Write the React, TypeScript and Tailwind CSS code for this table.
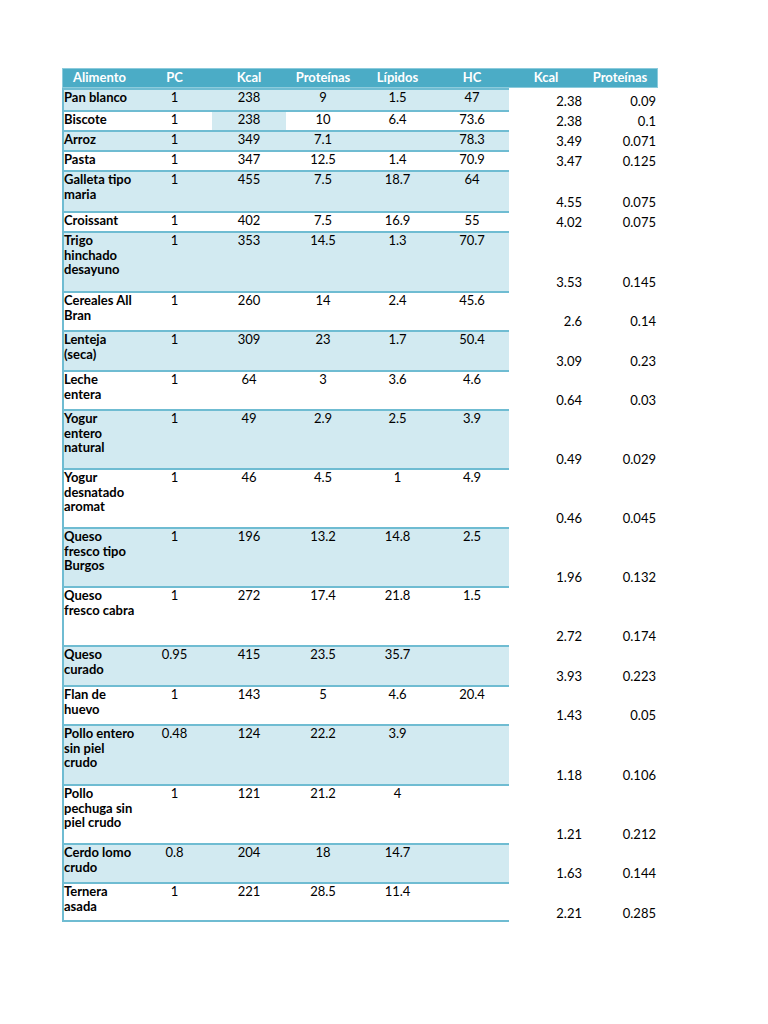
import React from "react"

type Row = {
  name: string[]
  pc: string
  kcal: string
  prot: string
  lip: string
  hc: string
  k2: string
  p2: string
  h: number
}

const rows: Row[] = [
  { name: ["Pan blanco"], pc: "1", kcal: "238", prot: "9", lip: "1.5", hc: "47", k2: "2.38", p2: "0.09", h: 22 },
  { name: ["Biscote"], pc: "1", kcal: "238", prot: "10", lip: "6.4", hc: "73.6", k2: "2.38", p2: "0.1", h: 20 },
  { name: ["Arroz"], pc: "1", kcal: "349", prot: "7.1", lip: "", hc: "78.3", k2: "3.49", p2: "0.071", h: 20 },
  { name: ["Pasta"], pc: "1", kcal: "347", prot: "12.5", lip: "1.4", hc: "70.9", k2: "3.47", p2: "0.125", h: 20 },
  { name: ["Galleta tipo", "maria"], pc: "1", kcal: "455", prot: "7.5", lip: "18.7", hc: "64", k2: "4.55", p2: "0.075", h: 41 },
  { name: ["Croissant"], pc: "1", kcal: "402", prot: "7.5", lip: "16.9", hc: "55", k2: "4.02", p2: "0.075", h: 20 },
  { name: ["Trigo", "hinchado", "desayuno"], pc: "1", kcal: "353", prot: "14.5", lip: "1.3", hc: "70.7", k2: "3.53", p2: "0.145", h: 60 },
  { name: ["Cereales All", "Bran"], pc: "1", kcal: "260", prot: "14", lip: "2.4", hc: "45.6", k2: "2.6", p2: "0.14", h: 39 },
  { name: ["Lenteja", "(seca)"], pc: "1", kcal: "309", prot: "23", lip: "1.7", hc: "50.4", k2: "3.09", p2: "0.23", h: 40 },
  { name: ["Leche", "entera"], pc: "1", kcal: "64", prot: "3", lip: "3.6", hc: "4.6", k2: "0.64", p2: "0.03", h: 39 },
  { name: ["Yogur", "entero", "natural"], pc: "1", kcal: "49", prot: "2.9", lip: "2.5", hc: "3.9", k2: "0.49", p2: "0.029", h: 59 },
  { name: ["Yogur", "desnatado", "aromat"], pc: "1", kcal: "46", prot: "4.5", lip: "1", hc: "4.9", k2: "0.46", p2: "0.045", h: 59 },
  { name: ["Queso", "fresco tipo", "Burgos"], pc: "1", kcal: "196", prot: "13.2", lip: "14.8", hc: "2.5", k2: "1.96", p2: "0.132", h: 59 },
  { name: ["Queso", "fresco cabra"], pc: "1", kcal: "272", prot: "17.4", lip: "21.8", hc: "1.5", k2: "2.72", p2: "0.174", h: 59 },
  { name: ["Queso", "curado"], pc: "0.95", kcal: "415", prot: "23.5", lip: "35.7", hc: "", k2: "3.93", p2: "0.223", h: 40 },
  { name: ["Flan de", "huevo"], pc: "1", kcal: "143", prot: "5", lip: "4.6", hc: "20.4", k2: "1.43", p2: "0.05", h: 39 },
  { name: ["Pollo entero", "sin piel", "crudo"], pc: "0.48", kcal: "124", prot: "22.2", lip: "3.9", hc: "", k2: "1.18", p2: "0.106", h: 60 },
  { name: ["Pollo", "pechuga sin", "piel crudo"], pc: "1", kcal: "121", prot: "21.2", lip: "4", hc: "", k2: "1.21", p2: "0.212", h: 59 },
  { name: ["Cerdo lomo", "crudo"], pc: "0.8", kcal: "204", prot: "18", lip: "14.7", hc: "", k2: "1.63", p2: "0.144", h: 39 },
  { name: ["Ternera", "asada"], pc: "1", kcal: "221", prot: "28.5", lip: "11.4", hc: "", k2: "2.21", p2: "0.285", h: 40 },
]

const headers = ["Alimento", "PC", "Kcal", "Proteínas", "Lípidos", "HC", "Kcal", "Proteínas"]
const widths = ["w-[75px]", "w-[75px]", "w-[74px]", "w-[74px]", "w-[75px]", "w-[74px]", "w-[74px]", "w-[74px]"]

function Cell({ w, children, blue }: { w: string; children: React.ReactNode; blue?: boolean }) {
  return (
    <div className={`${w} shrink-0 text-center leading-[14.5px] ${blue ? "bg-[#d2eaf1]" : ""}`}>
      {children}
    </div>
  )
}

export default function App() {
  return (
    <div
      className="min-h-[1024px] w-[768px] bg-white text-[13px] text-black"
      style={{ fontFamily: "Lato, 'Open Sans', sans-serif" }}
    >
      <div className="pt-[68px] pl-[62px]">
        {/* header */}
        <div className="flex h-[20px] w-[596px] items-center bg-[#4bacc6] border border-[#8ccbdc] text-white font-bold">
          {headers.map((h, i) => (
            <div key={i} className={`${widths[i]} shrink-0 text-center ${i === 0 ? "-ml-[1px]" : ""}`}>
              {h}
            </div>
          ))}
        </div>

        {rows.map((r, i) => {
          const blue = i % 2 === 0
          const last = i === rows.length - 1
          return (
            <div key={i} className="flex" style={{ height: r.h }}>
              <div
                className={`flex w-[447px] shrink-0 border-t-2 border-l-2 border-[#6fbcd2] ${last ? "border-b-2" : ""} ${
                  blue ? "bg-[#d2eaf1]" : "bg-white"
                }`}
              >
                <div className="w-[73px] shrink-0 whitespace-nowrap font-bold leading-[14.5px]">
                  {r.name.map((n, j) => (
                    <div key={j}>{n}</div>
                  ))}
                </div>
                <Cell w="w-[75px]">{r.pc}</Cell>
                <Cell w="w-[74px]" blue={i === 1}>
                  {r.kcal}
                </Cell>
                <Cell w="w-[74px]">{r.prot}</Cell>
                <Cell w="w-[75px]">{r.lip}</Cell>
                <Cell w="w-[74px]">{r.hc}</Cell>
              </div>
              <div className="flex w-[74px] shrink-0 items-end justify-end pb-[2px] pr-[1px] leading-[14.5px]">
                {r.k2}
              </div>
              <div className="flex w-[74px] shrink-0 items-end justify-end pb-[2px] pr-[1px] leading-[14.5px]">
                {r.p2}
              </div>
            </div>
          )
        })}
      </div>
    </div>
  )
}
